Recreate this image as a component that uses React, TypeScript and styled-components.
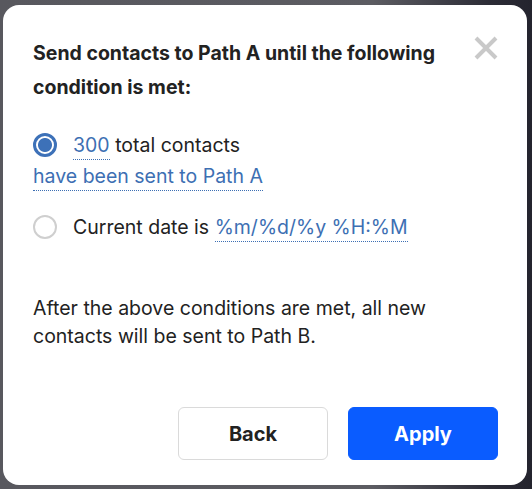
import React from "react";
import styled, { createGlobalStyle } from "styled-components";

const Global = createGlobalStyle`
  html, body { margin: 0; padding: 0; }
  body { font-family: "Inter", "Noto Sans", sans-serif; }
  * { box-sizing: border-box; }
`;

const Backdrop = styled.div`
  width: 532px;
  height: 489px;
  background: linear-gradient(90deg, #58585e 0%, #5c5c62 70%, #2c2c36 92%, #24242e 100%);
  padding: 5px 5px 4px 3px;
  display: flex;
`;

const Modal = styled.div`
  flex: 1;
  background: #fff;
  border-radius: 16px;
  padding: 31px 29px 25px 30px;
  display: flex;
  flex-direction: column;
  color: #222;
`;

const Header = styled.div`
  display: flex;
  align-items: flex-start;
  justify-content: space-between;
  gap: 20px;
`;

const Title = styled.h2`
  margin: 0;
  font-size: 19.5px;
  font-weight: 700;
  line-height: 34px;
  max-width: 420px;
  color: #222;
`;

const Close = styled.button`
  border: none;
  background: none;
  padding: 0;
  margin-top: 0;
  width: 24px;
  height: 24px;
  cursor: pointer;
  display: flex;
`;

const Options = styled.div`
  margin-top: 26px;
  display: flex;
  flex-direction: column;
  gap: 20px;
`;

const Option = styled.div`
  font-size: 19.5px;
  line-height: 31px;
  color: #222;
`;

const Radio = styled.span<{ $checked?: boolean }>`
  display: inline-block;
  vertical-align: -5px;
  width: 24px;
  height: 24px;
  border-radius: 50%;
  margin-right: 16px;
  border: ${(p) => (p.$checked ? "3px solid #3d71b8" : "2px solid #cfcfcf")};
  background: ${(p) =>
    p.$checked ? "radial-gradient(circle, #3d71b8 0 6.5px, #fff 7.5px)" : "#fff"};
`;

const Link = styled.span`
  color: #3d6fb3;
  border-bottom: 1.5px dotted #3d6fb3;
  padding-bottom: 2px;
`;

const Note = styled.p`
  margin: 51px 0 0;
  font-size: 19.5px;
  line-height: 28px;
  color: #222;
  max-width: 430px;
`;

const Footer = styled.div`
  margin-top: auto;
  display: flex;
  justify-content: flex-end;
  gap: 20px;
`;

const Button = styled.button<{ $primary?: boolean }>`
  width: 150px;
  height: 53px;
  border-radius: 6px;
  font-family: inherit;
  font-size: 20px;
  font-weight: 700;
  cursor: pointer;
  border: 1px solid ${(p) => (p.$primary ? "#0a5cff" : "#dadada")};
  background: ${(p) => (p.$primary ? "#0a5cff" : "#fff")};
  color: ${(p) => (p.$primary ? "#fff" : "#222")};
`;

export default function App() {
  return (
    <>
      <Global />
      <Backdrop>
        <Modal>
          <Header>
            <Title>Send contacts to Path A until the following condition is met:</Title>
            <Close aria-label="Close">
              <svg width="24" height="24" viewBox="0 0 24 24">
                <path d="M2 2 L22 22 M22 2 L2 22" stroke="#c9c9c9" strokeWidth="4" strokeLinecap="butt" />
              </svg>
            </Close>
          </Header>
          <Options>
            <Option>
              <Radio $checked />
              <Link>300</Link> total contacts
              <br />
              <Link>have been sent to Path A</Link>
            </Option>
            <Option>
              <Radio />
              Current date is <Link>%m/%d/%y %H:%M</Link>
            </Option>
          </Options>
          <Note>After the above conditions are met, all new contacts will be sent to Path B.</Note>
          <Footer>
            <Button>Back</Button>
            <Button $primary>Apply</Button>
          </Footer>
        </Modal>
      </Backdrop>
    </>
  );
}
